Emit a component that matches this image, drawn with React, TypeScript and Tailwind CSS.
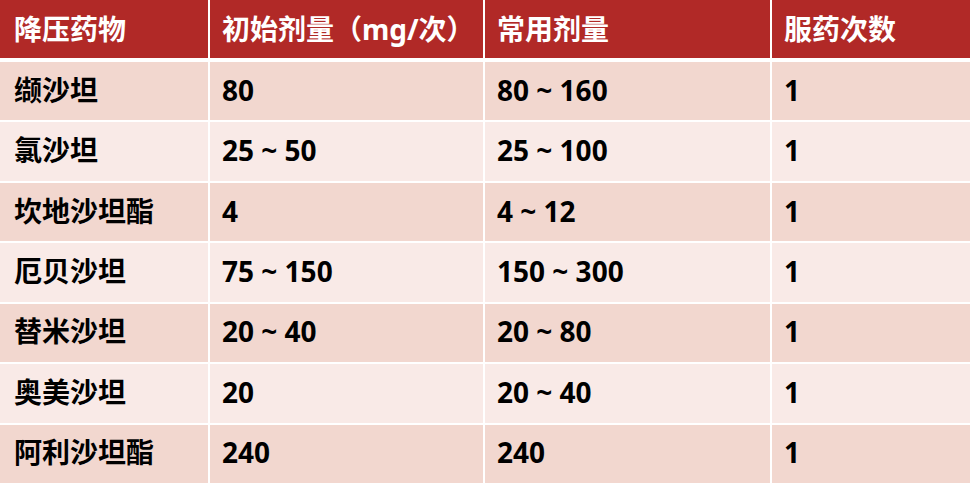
import React from "react";

const rows: string[][] = [
  ["缬沙坦", "80", "80 ~ 160", "1"],
  ["氯沙坦", "25 ~ 50", "25 ~ 100", "1"],
  ["坎地沙坦酯", "4", "4 ~ 12", "1"],
  ["厄贝沙坦", "75 ~ 150", "150 ~ 300", "1"],
  ["替米沙坦", "20 ~ 40", "20 ~ 80", "1"],
  ["奥美沙坦", "20", "20 ~ 40", "1"],
  ["阿利沙坦酯", "240", "240", "1"],
];

const headers = ["降压药物", "初始剂量（mg/次）", "常用剂量", "服药次数"];

export default function App() {
  return (
    <div
      className="w-[970px] h-[483px] bg-white flex flex-col overflow-hidden"
      style={{ fontFamily: '"Noto Sans", "Noto Sans CJK SC", sans-serif' }}
    >
      <div className="h-[58px] grid grid-cols-[208px_273px_285px_1fr] gap-x-[2px] bg-white">
        {headers.map((h, i) => (
          <div
            key={i}
            className={`bg-[#b12927] text-white font-bold text-[28px] flex items-center ${i === 0 ? "pl-[14px]" : "pl-[12px]"}`}
          >
            {h}
          </div>
        ))}
      </div>
      <div className="mt-[4px] flex-1 flex flex-col gap-y-[2px]">
        {rows.map((r, ri) => (
          <div
            key={ri}
            className="flex-1 grid grid-cols-[208px_273px_285px_1fr] gap-x-[2px]"
          >
            {r.map((c, ci) => (
              <div
                key={ci}
                className={`${ri % 2 === 0 ? "bg-[#f2d7cf]" : "bg-[#f9eae7]"} text-black font-bold text-[28px] flex items-center pb-[3px] ${ci === 0 ? "pl-[14px]" : "pl-[12px]"}`}
              >
                {c}
              </div>
            ))}
          </div>
        ))}
      </div>
    </div>
  );
}
